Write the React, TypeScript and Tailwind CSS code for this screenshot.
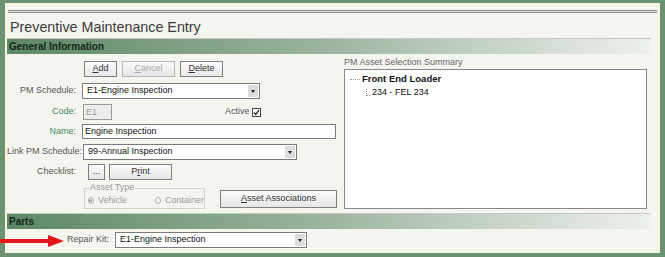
import React from "react";

const font = { fontFamily: '"Liberation Sans", Arial, sans-serif' };

function Btn({ children, disabled, className = "" }: { children: React.ReactNode; disabled?: boolean; className?: string }) {
  return (
    <div
      className={`flex h-[16px] items-center justify-center border bg-gradient-to-b from-[#fbfbfb] to-[#e6e6e6] text-[9px] whitespace-nowrap ${
        disabled ? "border-[#b8b8b8] text-[#a8a8a8]" : "border-[#7f7f7f] text-[#333]"
      } ${className}`}
    >
      {children}
    </div>
  );
}

function Select({ value, className = "" }: { value: string; className?: string }) {
  return (
    <div className={`flex h-[16px] items-center border border-[#7a7a7a] bg-white ${className}`}>
      <span className="flex-1 pl-[4px] text-[9px] text-[#111]">{value}</span>
      <div className="mr-[1px] flex h-[12px] w-[10px] items-center justify-center bg-[#dcdcdc]">
        <div className="h-0 w-0 border-x-[2px] border-t-[3px] border-x-transparent border-t-[#222]" />
      </div>
    </div>
  );
}

function Label({ children, green, className = "w-[72px]" }: { children: React.ReactNode; green?: boolean; className?: string }) {
  return (
    <div className={`${className} shrink-0 whitespace-nowrap pr-[3px] text-right text-[9px] ${green ? "text-[#3f8a63]" : "text-[#555]"}`}>
      {children}
    </div>
  );
}

function SectionBar({ title }: { title: string }) {
  return (
    <div className="mr-[7px] h-[16px] border-t border-[#c4cbc2] bg-gradient-to-r from-[#5c8864] via-[#9db5a0] to-[#eef1ec] pl-[2px] text-[10px] font-bold leading-[15px] text-[#15261a]">
      {title}
    </div>
  );
}

export default function App() {
  return (
    <div style={font} className="h-[257px] w-[665px] bg-[#6b9271] pb-[4px] pl-[5px] pr-[5px] pt-[3px]">
      <div className="flex h-full flex-col border-2 border-b-[1px] border-[#f7f5dc] bg-[#f5f5f0]">
        <div className="ml-[1px] mr-[1px] mt-[5px] h-[3px] border-y border-[#8f8f8f] bg-[#d8d8d8]" />
        <div className="ml-[3px] mt-[6px] h-[17px] text-[14.3px] leading-[17px] text-[#3a3a3a]">Preventive Maintenance Entry</div>
        <div className="mt-[2px]">
          <SectionBar title="General Information" />
        </div>
        <div className="flex">
          <div className="w-[330px] shrink-0">
            <div className="ml-[77px] mt-[7px] flex gap-[5px]">
              <Btn className="w-[33px]"><span><u>A</u>dd</span></Btn>
              <Btn disabled className="w-[53px]"><span><u>C</u>ancel</span></Btn>
              <Btn className="w-[43px]"><span><u>D</u>elete</span></Btn>
            </div>
            <div className="mt-[6px] flex items-center">
              <Label>PM Schedule:</Label>
              <Select value="E1-Engine Inspection" className="ml-[3px] w-[178px]" />
            </div>
            <div className="mt-[5px] flex items-center">
              <Label green>Code:</Label>
              <div className="ml-[4px] h-[16px] w-[29px] border border-[#9a9a9a] bg-[#ececec] pl-[2px] text-[9px] leading-[14px] text-[#9a9a9a]">E1</div>
              <div className="ml-[113px] text-[9px] text-[#555]">Active</div>
              <div className="ml-[2px] flex h-[9px] w-[9px] items-center justify-center border border-[#444] bg-white">
                <svg width="7" height="7" viewBox="0 0 7 7">
                  <path d="M1 3.5 L2.8 5.5 L6 1.2" stroke="#222" strokeWidth="1.3" fill="none" />
                </svg>
              </div>
            </div>
            <div className="mt-[4px] flex items-center">
              <Label green>Name:</Label>
              <div className="ml-[3px] h-[15px] w-[254px] border border-[#7a7a7a] bg-white pl-[2px] text-[9px] leading-[13px] text-[#111]">Engine Inspection</div>
            </div>
            <div className="mt-[5px] flex items-center">
              <Label>Link PM Schedule:</Label>
              <Select value="99-Annual Inspection" className="ml-[4px] w-[214px]" />
            </div>
            <div className="mt-[4px] flex items-center">
              <Label>Checklist:</Label>
              <Btn className="ml-[9px] w-[17px]">...</Btn>
              <Btn className="ml-[4px] w-[63px]"><span>P<u>r</u>int</span></Btn>
            </div>
            <div className="mt-[8px] flex items-end">
              <div className="relative ml-[77px] h-[21px] w-[121px] border border-[#d2d2c8]">
                <div className="absolute -top-[7px] left-[4px] bg-[#f5f5f0] px-[1px] text-[9px] leading-[10px] text-[#9a9a9a]">Asset Type</div>
                <div className="mt-[5px] flex items-center text-[9px] text-[#9a9a9a]">
                  <div className="ml-[3px] flex h-[7px] w-[7px] items-center justify-center rounded-full border border-[#b0b0b0]">
                    <div className="h-[3px] w-[3px] rounded-full bg-[#a0a0a0]" />
                  </div>
                  <span className="ml-[4px]">Vehicle</span>
                  <div className="ml-[28px] h-[7px] w-[7px] rounded-full border border-[#b0b0b0]" />
                  <span className="ml-[4px]">Container</span>
                </div>
              </div>
              <Btn className="mb-[1px] ml-[15px] h-[18px] w-[117px]"><span><u>A</u>sset Associations</span></Btn>
            </div>
          </div>
          <div className="ml-[7px] mt-[2px] flex flex-col">
            <div className="text-[9px] leading-[13px] text-[#666]">PM Asset Selection Summary</div>
            <div className="h-[140px] w-[303px] border border-[#888] bg-white pt-[2px]">
              <div className="flex items-center text-[9.5px] font-bold text-[#111]">
                <div className="ml-[5px] mr-[2px] w-[10px] border-t border-dotted border-[#999]" />
                Front End Loader
              </div>
              <div className="flex items-end text-[9px] text-[#111]">
                <div className="mb-[4px] ml-[21px] mr-[2px] h-[7px] w-[4px] border-b border-l border-dotted border-[#999]" />
                234 - FEL 234
              </div>
            </div>
          </div>
        </div>
        <div className="mt-[4px]">
          <SectionBar title="Parts" />
        </div>
        <div className="relative mt-[3px] flex items-center">
          <svg className="absolute -left-[7px] top-[3px]" width="64" height="12" viewBox="0 0 64 12">
            <rect x="0" y="4" width="50" height="4" fill="#e4161b" />
            <polygon points="48,0 64,6 48,12" fill="#e4161b" />
          </svg>
          <Label className="w-[105px]">Repair Kit:</Label>
          <Select value="E1-Engine Inspection" className="ml-[3px] w-[192px]" />
        </div>
      </div>
    </div>
  );
}
